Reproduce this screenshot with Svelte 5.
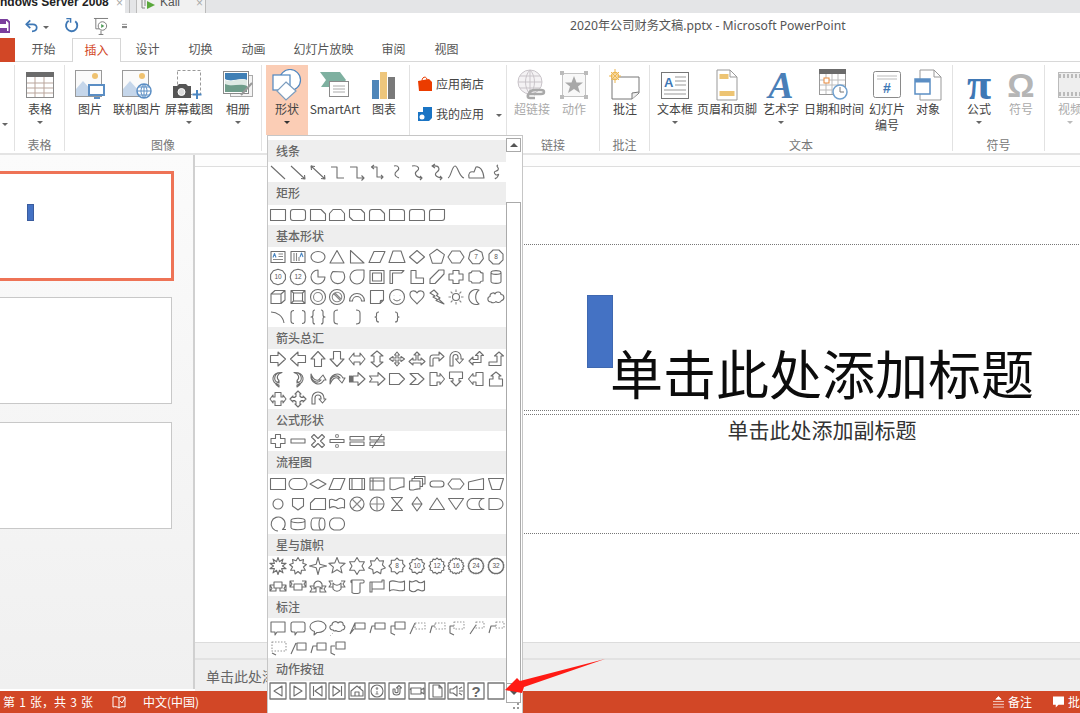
<script>
  // polygon / star outlines for the shape gallery, centred on a 20x20 cell
  function poly(n, r, ry = r, rot = -90) {
    let d = "";
    for (let i = 0; i < n; i++) {
      const a = ((rot + (i * 360) / n) * Math.PI) / 180;
      d += (i ? "L" : "M") + (10 + r * Math.cos(a)).toFixed(1) + " " + (10 + ry * Math.sin(a)).toFixed(1);
    }
    return d + "Z";
  }
  function star(n, ro, ri) {
    let d = "";
    for (let i = 0; i < n * 2; i++) {
      const r = i % 2 ? ri : ro;
      const a = ((-90 + (i * 180) / n) * Math.PI) / 180;
      d += (i ? "L" : "M") + (10 + r * Math.cos(a)).toFixed(1) + " " + (10 + r * Math.sin(a)).toFixed(1);
    }
    return d + "Z";
  }
  const circle = (r, cx = 10, cy = 10) => `M${cx - r} ${cy}a${r} ${r} 0 1 0 ${r * 2} 0a${r} ${r} 0 1 0 ${-r * 2} 0Z`;
  const box = "M2.5 4.5H17.5V15.5H2.5Z";

  const callout1 = "M7 11L3 16H3M8 5H18V11H8ZM8 5L3 16";
  const callout2 = "M8 5H18V11H8ZM8 8H5L3 15";
  const callout3 = "M8 4H18V11H8ZM8 8H4V15L8 17";

  const sections = [
    { title: "线条", shapes: [
      "M3 4L17 17",
      "M3 4L17 17M13 16.5L17 17L16.5 13",
      "M3 4L17 17M13 16.5L17 17L16.5 13M7 4.5L3 4L3.5 8",
      "M4 5H10V16H17",
      "M3 5H10V16H17M14.5 13.5L17 16L14.5 18.5",
      "M5 5H10V15H16M14 13L16 15L14 17M7 3L4.5 5L7 7",
      "M7 4C12 3 13 7 10 9S7 14 12 16",
      "M5 4C12 3 13 7 10 9S8 15 15 16M13 14L15 16L13 18",
      "M6 4C13 3 13 8 10 10S8 15 15 16M13 14L15 16L13 18M8 2L5 4L8 6",
      "M2 16C5 15 6 4 9 4S13 15 18 16",
      "M3 16C2 11 4 9 8 10L10 5C14 4 17 8 18 16Z",
      "M12 3C9 4 14 6 12 8S7 9 9 12S14 10 12 14S8 15 10 17",
    ]},
    { title: "矩形", shapes: [
      box,
      "M2.5 7Q2.5 4.5 5 4.5H15Q17.5 4.5 17.5 7V13Q17.5 15.5 15 15.5H5Q2.5 15.5 2.5 13Z",
      "M2.5 4.5H13L17.5 9V15.5H2.5Z",
      "M6 4.5H14L17.5 8.5V15.5H2.5V8.5Z",
      "M2.5 4.5H14L17.5 8V15.5H6L2.5 12Z",
      "M5 4.5H13.5L17.5 8.5V15.5H2.5V7Q2.5 4.5 5 4.5Z",
      "M2.5 4.5H15Q17.5 4.5 17.5 7V15.5H2.5Z",
      "M5 4.5H15Q17.5 4.5 17.5 7V15.5H2.5V7Q2.5 4.5 5 4.5Z",
      "M5 4.5H17.5V13Q17.5 15.5 15 15.5H2.5V7Q2.5 4.5 5 4.5Z",
    ]},
    { title: "基本形状", shapes: [
      { d: "M3 4.5H17V15.5H3Z", extra: "M10.5 7H15M10.5 9.5H15M5 12.5H15", blue: "M5 10.5L6.5 6.5L8 10.5" },
      { d: "M3 4.5H17V15.5H3Z", extra: "M6 6V14M8.5 6V14M11 10V14", blue: "M12 10L13.5 6L15 10" },
      "M3 10A7 5.5 0 1 0 17 10A7 5.5 0 1 0 3 10Z",
      "M10 3.5L17 16H3Z",
      "M3.5 3.5L17 16H3.5Z",
      "M7 4.5H18L13 15.5H2Z",
      "M6 4H14L18 15.5H2Z",
      "M10 3.5L17.5 10L10 16.5L2.5 10Z",
      poly(5, 7.8),
      "M6 4H14L18 10L14 16H6L2 10Z",
      { d: poly(7, 7.6), t: "7" },
      { d: poly(8, 7.6, 7.6, -67.5), t: "8" },
      { d: poly(10, 7.8), t: "10" },
      { d: poly(12, 7.8), t: "12" },
      "M10 3A7 7 0 1 0 17 10H10Z",
      "M6 4.5A7 7 0 1 0 16 5Z",
      "M10 3H17V10A7 7 0 1 1 10 3Z",
      "M3 3.5H17V16.5H3ZM5.5 6H14.5V14H5.5Z",
      "M3 3.5H17L14.5 6H5.5V16.5H3Z",
      "M4 3.5H9V11H16.5V16.5H4Z",
      "M3 12L12 3H17V7L8 16.5H3Z",
      "M7 3.5H13V7H17V13H13V16.5H7V13H3V7H7Z",
      "M6 4H14Q14 6 17 6V14Q14 14 14 16H6Q6 14 3 14V6Q6 6 6 4Z",
      "M5 5.5C5 3 15 3 15 5.5V14.5C15 17 5 17 5 14.5ZM5 5.5C5 8 15 8 15 5.5",
      "M3 7L7 3.5H17V13L13 16.5H3ZM3 7H13V16.5M13 7L17 3.5",
      "M3 3.5H17V16.5H3ZM5.5 6H14.5V14H5.5ZM3 3.5L5.5 6M17 3.5L14.5 6M3 16.5L5.5 14M17 16.5L14.5 14",
      { d: circle(7.5), extra: circle(4.5) },
      { d: circle(7.5), extra: circle(4.8) + "M6.5 6.5L13.5 13.5M7.5 5.5L14.5 12.5" },
      "M2.5 14A7.5 7.5 0 0 1 17.5 14H14.5A4.5 4.5 0 0 0 5.5 14Z",
      "M3.5 3.5H16.5V13L13 16.5H3.5ZM16.5 13L13.5 13.5L13 16.5",
      { d: circle(7.5), extra: "M7 8V8.2M13 8V8.2M6.5 12C8 14.5 12 14.5 13.5 12" },
      "M10 6C8 2.5 2.5 3.5 3 8C3.5 12 8 14 10 17C12 14 16.5 12 17 8C17.5 3.5 12 2.5 10 6Z",
      "M7 3L11 7L9.5 8.5L13 11L11.5 12L17 17L9 13.5L10.5 12.5L6 10L8 9L3 6Z",
      { d: circle(3.5), extra: "M10 2.5V5M10 15V17.5M2.5 10H5M15 10H17.5M4.7 4.7L6.5 6.5M13.5 13.5L15.3 15.3M15.3 4.7L13.5 6.5M6.5 13.5L4.7 15.3" },
      "M13 3A7.5 7.5 0 1 0 13 17A9 9 0 0 1 13 3Z",
      "M5 15C1 15 1 10 4 9.5C3.5 6 8 5 9 7C10 4 15 4.5 15 7.5C18.5 7.5 19 13 15.5 13.5C14.5 16 11 16 10 14.5C9 16 6 16 5 15Z",
      "M3 5C9 5 15 9 16 16",
      "M6 3.5Q3 3.5 3 6V14Q3 16.5 6 16.5M14 3.5Q17 3.5 17 6V14Q17 16.5 14 16.5",
      "M7 3Q5 3 5 5V8Q5 10 3 10Q5 10 5 12V15Q5 17 7 17M13 3Q15 3 15 5V8Q15 10 17 10Q15 10 15 12V15Q15 17 13 17",
      "M11 3Q7 3 7 6V14Q7 17 11 17",
      "M9 3Q13 3 13 6V14Q13 17 9 17",
      "M12 5Q9.5 5 9.5 7V9Q9.5 10 8 10Q9.5 10 9.5 11V13Q9.5 15 12 15",
      "M8 5Q10.5 5 10.5 7V9Q10.5 10 12 10Q10.5 10 10.5 11V13Q10.5 15 8 15",
    ]},
    { title: "箭头总汇", shapes: [
      "M2.5 6.5H10V3L17.5 10L10 17V13.5H2.5Z",
      "M17.5 6.5H10V3L2.5 10L10 17V13.5H17.5Z",
      "M6.5 17.5V10H3L10 2.5L17 10H13.5V17.5Z",
      "M6.5 2.5V10H3L10 17.5L17 10H13.5V2.5Z",
      "M2 10L7 4V7H13V4L18 10L13 16V13H7V16Z",
      "M10 2L16 7H13V13H16L10 18L4 13H7V7H4Z",
      "M10 3L12.5 6H11V9H14V7.5L17.5 10L14 12.5V11H11V14H12.5L10 17L7.5 14H9V11H6V12.5L2.5 10L6 7.5V9H9V6H7.5Z",
      "M10 3L13 6H11V11H14V9L18 12.5L14 16V14H6V16L2 12.5L6 9V11H9V6H7Z",
      "M3 17V9Q3 6 6 6H12V3L17 7.5L12 12V9H7Q6 9 6 10V17Z",
      "M4 17V8A5.5 5.5 0 0 1 15 8V10H17.5L13.5 14.5L9.5 10H12V8A2.5 2.5 0 0 0 7 8V17Z",
      "M3 12L7 8V10.5H12V6.5H9.5L13.5 2.5L17.5 6.5H15V13.5H7V16Z",
      "M3 13H11V7H8.5L13 3L17.5 7H15V16.5H3Z",
      "M14 3.5C6 3 4 12 11 14V11.5L8 15.5L11 18V16C2 14 3 3 14 3.5ZM14 3.5C9 5 8 9 11 11.5",
      "M6 3.5C14 3 16 12 9 14V11.5L12 15.5L9 18V16C18 14 17 3 6 3.5ZM6 3.5C11 5 12 9 9 11.5",
      "M3 5C3 13 10 15 13 11H10.5L15 6L18 11H16C12 18 2 15 3 5ZM3 5C5 10 8 12 10.5 11",
      "M3 15C3 7 10 5 13 9H10.5L15 14L18 9H16C12 2 2 5 3 15ZM3 15C5 10 8 8 10.5 9",
      "M6 7H11V3.5L18 10L11 16.5V13H6ZM2.5 7H3.5V13H2.5ZM4.5 7H5V13H4.5Z",
      "M2.5 7H11V3.5L18 10L11 16.5V13H2.5L5 10Z",
      "M2.5 4.5H12L17.5 10L12 15.5H2.5Z",
      "M3 4.5H11L17 10L11 15.5H3L9 10Z",
      "M3 3.5H10V7H13V4.5L17.5 10L13 15.5V13H10V16.5H3Z",
      "M3.5 3H16.5V9.5H13V12H15L10 17L5 12H7V9.5H3.5Z",
      "M17 3.5H10V7H7V4.5L2.5 10L7 15.5V13H10V16.5H17Z",
      "M3.5 17V10H7V7H5L10 3L15 7H13V10H16.5V17Z",
      "M7 3.5H13V8H15V6L18 10L15 14V12H13V16.5H7V12H5V14L2 10L5 6V8H7Z",
      "M10 2L13 5H12V7.5H13V8.5H15V7L18 10L15 13V11.5H13V12.5H12V15H13L10 18L7 15H8V12.5H7V11.5H5V13L2 10L5 7V8.5H7V7.5H8V5H7Z",
      "M4 15V9A6 6 0 0 1 16 9V10H18L14.5 14L11 10H13V9A3 3 0 0 0 7 9V15Z",
    ]},
    { title: "公式形状", shapes: [
      "M7.5 3.5H12.5V7.5H17V12.5H12.5V16.5H7.5V12.5H3V7.5H7.5Z",
      "M3 8H17V12H3Z",
      "M6 3.5L10 7.5L14 3.5L16.5 6L12.5 10L16.5 14L14 16.5L10 12.5L6 16.5L3.5 14L7.5 10L3.5 6Z",
      { d: "M3 8.5H17V11.5H3Z", extra: circle(1.5, 10, 5) + circle(1.5, 10, 15) },
      "M3 5.5H17V9H3ZM3 11H17V14.5H3Z",
      "M3 5.5H17V9H3ZM3 11H17V14.5H3ZM5 17L15 3",
    ]},
    { title: "流程图", shapes: [
      box,
      "M6 4.5H14A5 5.5 0 0 1 14 15.5H6A5 5.5 0 0 1 6 4.5Z",
      "M10 5.5L18 10L10 14.5L2 10Z",
      "M6.5 4.5H18L13.5 15.5H2Z",
      "M2.5 4.5H17.5V15.5H2.5ZM5 4.5V15.5M15 4.5V15.5",
      "M3 4H17V16H3ZM3 7H17M6 4V16",
      "M3 4H17V13C12 12 8 18 3 15Z",
      "M2.5 7H13V15C9 14 6 17.5 2.5 15.5ZM5 7V4.5H15.5V12.5H13M7.5 4.5V2.5H18V10H15.5",
      "M6 7H14A3 3 0 0 1 14 13H6A3 3 0 0 1 6 7Z",
      "M6 5H14L18 10L14 15H6L2 10Z",
      "M2.5 8L17.5 4.5V15.5H2.5Z",
      "M2.5 4.5H17.5L14 15.5H6Z",
      circle(5),
      "M4.5 4.5H15.5V12L10 16L4.5 12Z",
      "M7 4.5H17.5V15.5H2.5V9Z",
      "M2.5 6C6 3.5 8 8 10 6S14.5 3.5 17.5 6V14C14 12 12 16 10 14S6 12 2.5 14Z",
      { d: circle(7), extra: "M5 5L15 15M15 5L5 15" },
      { d: circle(7), extra: "M3 10H17M10 3V17" },
      "M4.5 3.5H15.5L4.5 16.5H15.5Z",
      "M10 3L15 10L10 17L5 10ZM5 10H15",
      "M10 4L17.5 15.5H2.5Z",
      "M10 15.5L17.5 4.5H2.5Z",
      "M6 4.5H18A5 5.5 0 0 0 18 15.5H6A5 5.5 0 0 1 6 4.5Z",
      "M3 4.5H11A6 5.5 0 0 1 11 15.5H3Z",
      "M10 17A7 7 0 1 1 14.5 15.5H18",
      "M3 6.5C3 3.5 17 3.5 17 6.5V13.5C17 16.5 3 16.5 3 13.5ZM3 6.5C3 9.5 17 9.5 17 6.5",
      "M6 4H14C18 4 18 16 14 16H6C2 16 2 4 6 4ZM14 4C10 4 10 16 14 16",
      "M7 4H13C19 6 19 14 13 16H7C1 14 1 6 7 4Z",
    ]},
    { title: "星与旗帜", shapes: [
      star(10, 8.5, 4.5),
      star(9, 8.5, 5.5),
      star(4, 8.5, 2.5),
      star(5, 8.5, 3.8),
      star(6, 8.5, 5),
      star(7, 8.5, 5.5),
      { d: star(8, 8, 6.2), t: "8" },
      { d: star(10, 8, 6.4), t: "10" },
      { d: star(12, 8, 6.6), t: "12" },
      { d: star(16, 8, 6.8), t: "16" },
      { d: star(24, 8, 7), t: "24" },
      { d: star(32, 8, 7.2), t: "32" },
      "M6 6H14V12H6ZM6 9H2V15H8V12M14 9H18V15H12V12M2 15L4 12.5L2 9M18 15L16 12.5L18 9",
      "M6 8H14V14H6ZM6 5H2V11H6M14 5H18V11H14M2 5L4 8L2 11M18 5L16 8L18 11",
      "M6 8C8 4 12 4 14 8V13C12 10 8 10 6 13ZM6 10H2L4 13L2 16H8V12M14 10H18L16 13L18 16H12V12",
      "M6 7C8 10 12 10 14 7V13C12 16 8 16 6 13ZM6 5H2L4 8L2 11H6M14 5H18L16 8L18 11H14",
      "M5 4H16C17.5 4 17.5 7 16 7H13V16C13 18 5 18 5 16ZM5 4C3.5 4 3.5 7 5 7V17",
      "M3 6H15V4H17V13H5V16H3ZM5 6V13",
      "M2.5 6C7 2 12 9 17.5 5V14C12 17 7 11 2.5 15Z",
      "M2.5 5C6 8 8 3 10 5S14 8 17.5 5V14C14 17 12 12 10 14S6 17 2.5 14Z",
    ]},
    { title: "标注", shapes: [
      "M3 4H17V14H9L7 17L7 14H3Z",
      "M5 4H15Q17 4 17 6V12Q17 14 15 14H9L7 17V14H5Q3 14 3 12V6Q3 4 5 4Z",
      "M10 3C15 3 18 6 18 9S14 15 9 14.5L6 17L6.5 13.5C3.5 12.5 2 11 2 8.5C2 5.5 6 3 10 3Z",
      { d: "M6 12C2 12 2 7 5 7C5 3 10 3 11 5C13 3 17 4 16 7C19 8 18 12 15 12C14 14 10 14 9 12.5C8 13.5 7 13 6 12Z", extra: "M5 15.5H5.5M3 17.5H3.5" },
      callout1, callout2, callout3,
      { d: "M8 5L3 16", dash: "M8 5H18V11H8Z" },
      { d: "M8 8H5L3 15", dash: "M8 5H18V11H8Z" },
      { d: "M8 8H4V15L8 17", dash: "M8 4H18V11H8Z" },
      { d: "M4 16L10 7", dash: "M10 4H18V10H10Z" },
      { d: "M10 8H5L3 15", dash: "M10 4H18V10H10Z" },
      { d: "M8 17L4 15", dash: "M4 4H18V13H4Z" },
      "M3 16L8 5M9 5V12M9 5H18V12H9Z",
      "M3 15L5 8H9M9 5V12M9 5H18V12H9Z",
      "M8 8H4V15L8 17M9 4V11M9 4H18V11H9Z",
    ]},
    { title: "动作按钮", btn: true, shapes: [
      "M14 5V15L6 10Z",
      "M6 5V15L14 10Z",
      "M14 5V15L7 10ZM5.5 5V15",
      "M6 5V15L13 10ZM14.5 5V15",
      "M4 10L10 5L16 10V15H4ZM8 15V11H12V15M13 5V7",
      { d: circle(6), extra: circle(0.8, 10, 7.5) + "M8.5 13H11.5M10 10V13" },
      "M6 8V11C6 15 13 15 13 11V7H14.5L12 4.5L9.5 7H11V11C11 12 8 12 8 11V8Z",
      "M4 7H14V13H4ZM14 9L17 7V13L14 11M4 7L3 9",
      "M6 4H12L15 7V16H6ZM12 4V7H15",
      "M4 8H7L11 5V15L7 12H4ZM13 8L16 6M13 10H17M13 12L16 14",
      { d: "", help: true },
      "",
    ]},
  ];
</script>

<div class="app">
  <div class="winbar">
    <div class="wintab">
      <span class="wintab-text">ndows Server 2008</span>
      <span class="x">×</span>
    </div>
    <div class="split"></div>
    <div class="wintab kali">
      <svg width="18" height="13" viewBox="0 0 18 13">
        <path d="M1 0V8H4M4 0V6" fill="none" stroke="#888" />
        <path d="M6 1V9L14 5Z" fill="#5aa83c" />
      </svg>
      <span class="kali-text">Kali</span>
      <span class="x">×</span>
    </div>
  </div>

  <div class="titlebar">
    <div class="qat">
      <svg class="q-save" width="10" height="14" viewBox="0 0 10 14">
        <path d="M-3 1H7L9.5 3.5V13H-3Z" fill="none" stroke="#7a3f9d" stroke-width="2" />
        <path d="M0 1.5H6V5H0ZM0 9H7V13H0Z" fill="#7a3f9d" />
      </svg>
      <svg class="q-undo" width="14" height="14" viewBox="0 0 16 14">
        <path d="M2 5H9C15 5 15 13 8 13" fill="none" stroke="#3f78b5" stroke-width="2" />
        <path d="M6 0.5L1.5 5L6 9.5" fill="none" stroke="#3f78b5" stroke-width="2" />
      </svg>
      <span class="caret q-caret"></span>
      <svg class="q-redo" width="15" height="15" viewBox="0 0 16 16">
        <path d="M5 3A6 6 0 1 0 12 3.500" fill="none" stroke="#3f78b5" stroke-width="2" />
        <path d="M2.500 0.500H7V5" fill="none" stroke="#3f78b5" stroke-width="1.600" />
      </svg>
      <svg class="q-show" width="16" height="20" viewBox="0 0 17 20">
        <path d="M1 2H16M3 2V13H8M6 19H11M8.500 15V19" fill="none" stroke="#777" />
        <circle cx="10" cy="10" r="4.500" fill="#fff" stroke="#777" />
        <path d="M8.700 7.800V12.200L12 10Z" fill="#4e9a57" />
      </svg>
      <span class="q-more"></span>
    </div>
    <div class="doc-title">2020年公司财务文稿.pptx - Microsoft PowerPoint</div>
  </div>

  <div class="tabs">
    <div class="file"></div>
    <div class="tab t-home">开始</div>
    <div class="tab active">插入</div>
    <div class="tab t-wide">设计</div>
    <div class="tab t-wide">切换</div>
    <div class="tab t-wide">动画</div>
    <div class="tab t-show">幻灯片放映</div>
    <div class="tab t-wide">审阅</div>
    <div class="tab t-wide">视图</div>
  </div>

  <div class="ribbon">
    <div class="group g15">
      <div class="items"><span class="caret stub"></span></div>
    </div>

    <div class="group g50">
      <div class="items">
        <div class="btn w50">
          <div class="ico">
            <svg width="28" height="26" viewBox="0 0 28 26">
              <rect x="0.500" y="0.500" width="27" height="25" fill="#fff" stroke="#8b8b8b" />
              <rect x="0" y="0" width="28" height="5" fill="#6b6b6b" />
              <path d="M1 11H27M1 16H27M1 21H27M9 5V25M18 5V25" stroke="#b9a59b" />
            </svg>
          </div>
          <span class="lbl">表格</span><span class="caret"></span>
        </div>
      </div>
      <div class="glabel">表格</div>
    </div>

    <div class="group g197">
      <div class="items pad3">
        <div class="btn w44">
          <div class="ico">
            <svg width="32" height="32" viewBox="0 0 32 32">
              <rect x="1.500" y="1.500" width="26" height="26" fill="#fafafa" stroke="#999" />
              <path d="M2 27V20L9 12L18 22V27Z" fill="#c5d6ea" />
              <circle cx="21" cy="7" r="3" fill="#efc270" />
              <rect x="15" y="16" width="15" height="10" fill="#fff" stroke="#5b8ec4" stroke-width="2" />
              <path d="M20 29H26" stroke="#5b8ec4" stroke-width="2" />
            </svg>
          </div>
          <span class="lbl">图片</span>
        </div>
        <div class="btn w50">
          <div class="ico">
            <svg width="32" height="32" viewBox="0 0 32 32">
              <rect x="1.500" y="1.500" width="26" height="26" fill="#fafafa" stroke="#999" />
              <path d="M2 27V20L9 12L18 22V27Z" fill="#c5d6ea" />
              <circle cx="21" cy="7" r="3" fill="#efc270" />
              <circle cx="23" cy="22" r="7" fill="#fff" stroke="#5b8ec4" stroke-width="1.500" />
              <path d="M16 22H30M23 15V29M18 18H28M18 26H28M23 15C19 19 19 25 23 29M23 15C27 19 27 25 23 29" fill="none" stroke="#5b8ec4" />
            </svg>
          </div>
          <span class="lbl">联机图片</span>
        </div>
        <div class="btn w54">
          <div class="ico">
            <svg width="34" height="32" viewBox="0 0 34 32">
              <rect x="5.500" y="1.500" width="23" height="24" fill="none" stroke="#999" stroke-dasharray="3 2" />
              <path d="M1 17H5L7 15H14L16 17H19V29H1Z" fill="#555" />
              <circle cx="9.500" cy="23" r="3.500" fill="#ddd" stroke="#fff" />
              <path d="M25 21V30M20.500 25.500H29.500" stroke="#4a86c2" stroke-width="2" />
            </svg>
          </div>
          <span class="lbl">屏幕截图</span><span class="caret"></span>
        </div>
        <div class="btn w44">
          <div class="ico">
            <svg width="32" height="30" viewBox="0 0 32 30">
              <rect x="8.500" y="5.500" width="22" height="21" fill="#f4f4f4" stroke="#aaa" />
              <rect x="1.500" y="1.500" width="25" height="22" fill="#fff" stroke="#8a8a8a" />
              <path d="M3 3H25V10C18 7 10 13 3 9Z" fill="#3f7fb5" />
              <path d="M3 10C10 13 18 7 25 10V16C18 13 10 17 3 14Z" fill="#dfe9e4" />
              <path d="M3 14C10 17 18 13 25 16V22H3Z" fill="#6f9c8a" />
              <path d="M19 25L30 13" stroke="#999" stroke-width="2" />
            </svg>
          </div>
          <span class="lbl">相册</span><span class="caret"></span>
        </div>
      </div>
      <div class="glabel">图像</div>
    </div>

    <div class="group g148">
      <div class="items pad4">
        <div class="btn w42 hot">
          <div class="ico">
            <svg width="32" height="32" viewBox="0 0 32 32">
              <circle cx="19" cy="11" r="10.500" fill="#fff" stroke="#4f87c0" stroke-width="1.200" />
              <rect x="2" y="6" width="17" height="15" fill="#fff" stroke="#4f87c0" stroke-width="1.200" />
              <path d="M15 13L25 22L15 31L6 22Z" fill="#fff" stroke="#7b9cbe" stroke-width="1.200" />
            </svg>
          </div>
          <span class="lbl">形状</span><span class="caret dark"></span>
        </div>
        <div class="btn w54">
          <div class="ico">
            <svg width="32" height="30" viewBox="0 0 32 30">
              <path d="M1 2H21L27 10L21 17H2L7 10Z" fill="#7eb0a0" />
              <rect x="10.500" y="11.500" width="19" height="15" fill="#fff" stroke="#8a8a8a" />
              <path d="M14 16H26M14 19H26M14 22H26" stroke="#aaa" />
            </svg>
          </div>
          <span class="lbl">SmartArt</span>
        </div>
        <div class="btn w44">
          <div class="ico">
            <svg width="24" height="28" viewBox="0 0 24 28">
              <rect x="0" y="9" width="7" height="19" fill="#4f86b9" />
              <rect x="8" y="1" width="7" height="27" fill="#eec67c" />
              <rect x="16" y="6" width="7" height="22" fill="#797979" />
            </svg>
          </div>
          <span class="lbl">图表</span>
        </div>
      </div>
      <div class="glabel"></div>
    </div>

    <div class="group g97">
      <div class="items apps">
        <div class="app-row">
          <svg width="14" height="16" viewBox="0 0 14 16">
            <path d="M0 5L11 3L14 6V15H1Z" fill="#eb3c00" />
            <path d="M4 5C4 0 9 0 9 4" fill="none" stroke="#eb3c00" />
          </svg>
          <span>应用商店</span>
        </div>
        <div class="app-row">
          <svg width="14" height="15" viewBox="0 0 14 15">
            <path d="M5 0H14V11L11 14H0V5H5Z" fill="#1a74c4" />
            <circle cx="4" cy="10" r="2.500" fill="#fff" />
          </svg>
          <span>我的应用</span>
          <span class="caret app-caret"></span>
        </div>
      </div>
      <div class="glabel"></div>
    </div>

    <div class="group g93">
      <div class="items">
        <div class="btn w50 off">
          <div class="ico">
            <svg width="30" height="32" viewBox="0 0 30 32">
              <circle cx="13" cy="13" r="12" fill="#f4f2f4" stroke="#c9c4c9" />
              <path d="M1 13H25M13 1V25M3 7H23M3 19H23M13 1C7 7 7 19 13 25M13 1C19 7 19 19 13 25" fill="none" stroke="#c9c4c9" />
              <path d="M12 25C12 21 18 21 19 21H24M18 29H13C10 29 10 25 13 25H18" fill="none" stroke="#a9a9a9" stroke-width="2.500" />
              <path d="M17 25H24C28 25 28 21 24 21" fill="none" stroke="#a9a9a9" stroke-width="2.500" />
            </svg>
          </div>
          <span class="lbl">超链接</span>
        </div>
        <div class="btn w34 off">
          <div class="ico">
            <svg width="28" height="28" viewBox="0 0 28 28">
              <rect x="2.500" y="2.500" width="23" height="23" fill="#f8f8f8" stroke="#c4c4c4" />
              <path d="M0 0h4v4h-4zM24 0h4v4h-4zM0 24h4v4h-4zM24 24h4v4h-4z" fill="#bbb" />
              <path d="M14 5L16.500 11.500H23L18 15.500L20 22L14 18L8 22L10 15.500L5 11.500H11.500Z" fill="#a8a8a8" />
            </svg>
          </div>
          <span class="lbl">动作</span>
        </div>
      </div>
      <div class="glabel">链接</div>
    </div>

    <div class="group g50">
      <div class="items">
        <div class="btn w50">
          <div class="ico">
            <svg width="32" height="32" viewBox="0 0 32 32">
              <path d="M3 8H30V24L23 30H3Z" fill="#fff" stroke="#777" />
              <path d="M30 23L23 24L23 30" fill="#eee" stroke="#777" />
              <circle cx="6" cy="7" r="3.500" fill="#fff" stroke="#edb752" stroke-width="1.500" />
              <path d="M6 0V14M0 7H12M2 3L10 11M10 3L2 11" stroke="#edb752" />
            </svg>
          </div>
          <span class="lbl">批注</span>
        </div>
      </div>
      <div class="glabel">批注</div>
    </div>

    <div class="group g303">
      <div class="items">
        <div class="btn w50">
          <div class="ico">
            <svg width="30" height="28" viewBox="0 0 30 28">
              <rect x="1.500" y="1.500" width="27" height="26" fill="#fff" stroke="#777" />
              <text x="4" y="16" class="svg-a">A</text>
              <path d="M15 6H26M15 10H26M15 14H26M4 19H26M4 23H26" stroke="#999" />
            </svg>
          </div>
          <span class="lbl">文本框</span><span class="caret"></span>
        </div>
        <div class="btn w54">
          <div class="ico">
            <svg width="22" height="32" viewBox="0 0 22 32">
              <path d="M1 1H14L21 8V31H1ZM14 1V8H21" fill="#fff" stroke="#999" />
              <rect x="3.500" y="5" width="9" height="5" fill="#edc473" />
              <rect x="3.500" y="22" width="15" height="5" fill="#edc473" />
            </svg>
          </div>
          <span class="lbl">页眉和页脚</span>
        </div>
        <div class="btn w54">
          <div class="ico"><span class="wordart">A</span></div>
          <span class="lbl">艺术字</span><span class="caret"></span>
        </div>
        <div class="btn w52">
          <div class="ico">
            <svg width="30" height="32" viewBox="0 0 30 32">
              <rect x="0.500" y="0.500" width="26" height="25" fill="#fff" stroke="#999" />
              <rect width="27" height="5" fill="#6b6b6b" />
              <path d="M1 11H26M1 16H26M1 21H26M7 5V25M13 5V25M19 5V25" stroke="#bbb" />
              <rect x="5" y="9" width="5" height="5" fill="#fff" stroke="#e88a3c" />
              <circle cx="21" cy="23" r="7" fill="#fff" stroke="#6fa0cf" stroke-width="1.500" />
              <path d="M21 18V23H25" fill="none" stroke="#777" />
            </svg>
          </div>
          <span class="lbl">日期和时间</span>
        </div>
        <div class="btn w54">
          <div class="ico">
            <svg width="28" height="28" viewBox="0 0 28 28">
              <rect x="0.500" y="0.500" width="27" height="26" rx="2" fill="#fff" stroke="#8a8a8a" />
              <path d="M4 5H24M4 8H24" stroke="#bbb" />
              <text x="14" y="22" class="svg-hash">#</text>
            </svg>
          </div>
          <span class="lbl">幻灯片</span><span class="lbl">编号</span>
        </div>
        <div class="btn w28">
          <div class="ico">
            <svg width="28" height="32" viewBox="0 0 28 32">
              <path d="M6 1H20L27 8V31H6ZM20 1V8H27" fill="#fff" stroke="#999" />
              <rect x="1" y="10" width="15" height="15" fill="#fff" stroke="#5b8ec4" stroke-width="1.500" />
              <rect x="1" y="10" width="15" height="3.500" fill="#5b8ec4" />
            </svg>
          </div>
          <span class="lbl">对象</span>
        </div>
      </div>
      <div class="glabel">文本</div>
    </div>

    <div class="group g92">
      <div class="items">
        <div class="btn w52">
          <div class="ico"><span class="pi">π</span></div>
          <span class="lbl">公式</span><span class="caret"></span>
        </div>
        <div class="btn w32 off">
          <div class="ico"><span class="omega">Ω</span></div>
          <span class="lbl">符号</span>
        </div>
      </div>
      <div class="glabel">符号</div>
    </div>

    <div class="group last">
      <div class="items">
        <div class="btn w50 off">
          <div class="ico">
            <svg width="24" height="28" viewBox="0 0 24 28">
              <rect x="0.500" y="1.500" width="30" height="25" fill="#eee" stroke="#bbb" />
              <path d="M1 5H30M1 23H30" stroke="#bbb" stroke-width="4" stroke-dasharray="2 2" />
            </svg>
          </div>
          <span class="lbl">视频</span><span class="caret"></span>
        </div>
      </div>
    </div>
  </div>

  <div class="main">
    <div class="thumbs">
      <div class="thumb current"><span class="mini"></span></div>
      <div class="thumb"></div>
      <div class="thumb"></div>
    </div>
    <div class="stage">
      <div class="stage-top"></div>
      <div class="canvas">
        <div class="slide">
          <span class="blue-box"></span>
          <div class="title-box">单击此处添加标题</div>
          <div class="sub-box">单击此处添加副标题</div>
        </div>
      </div>
      <div class="hscroll"></div>
      <div class="notes">单击此处添加备注</div>
    </div>
  </div>

  <div class="status">
    <span class="s-page">第 1 张，共 3 张</span>
    <svg class="s-book" width="14" height="15" viewBox="0 0 14 15">
      <path d="M7 3C5 1.500 3 1.500 1 2V12C3 11.500 5 11.500 7 13C9 11.500 11 11.500 13 12V2C11 1.500 9 1.500 7 3ZM7 3V13" fill="none" stroke="#fff" />
      <path d="M8 6L10 8L13 3" fill="none" stroke="#fff" />
    </svg>
    <span class="s-lang">中文(中国)</span>
    <span class="s-right">
      <svg width="12" height="13" viewBox="0 0 12 13">
        <path d="M3 3L6 0L9 3ZM0 5.500H12M0 8.500H12M0 11.500H12" fill="#fff" stroke="#fff" stroke-width="0.800" />
      </svg>
      <span class="s-notes">备注</span>
      <svg width="12" height="13" viewBox="0 0 12 13">
        <path d="M0 0H12V9H6L3 12V9H0Z" fill="#fff" />
      </svg>
      <span>批注</span>
    </span>
  </div>

  <div class="menu">
    <div class="menu-body">
      <div class="list">
        {#each sections as sec}
          <div class="sec-title">{sec.title}</div>
          <div class="grid">
            {#each sec.shapes as s}
              {@const shape = typeof s === "string" ? { d: s } : s}
              <svg class:action={sec.btn} width="20" height="20" viewBox="0 0 20 20">
                {#if sec.btn}
                  <rect x="2" y="2" width="16" height="16" class="btn-frame" />
                {/if}
                {#if shape.help}
                  <text x="10" y="15.500" class="help">?</text>
                {/if}
                {#if shape.d}<path d={shape.d} />{/if}
                {#if shape.extra}<path d={shape.extra} class="thin" />{/if}
                {#if shape.blue}<path d={shape.blue} class="blue" />{/if}
                {#if shape.dash}<path d={shape.dash} class="dash" />{/if}
                {#if shape.t}<text x="10" y="12.300" class="num">{shape.t}</text>{/if}
              </svg>
            {/each}
          </div>
        {/each}
      </div>
      <div class="scroller">
        <div class="sb-up"><span></span></div>
        <div class="sb-track"></div>
        <div class="sb-thumb"></div>
        <div class="sb-down"><span></span></div>
      </div>
    </div>
    <div class="grip">
      <svg width="10" height="9" viewBox="0 0 10 9">
        <path d="M6 0h2v2h-2zM2 4h2v2h-2zM6 4h2v2h-2z" fill="#999" />
      </svg>
    </div>
  </div>

  <svg class="arrow" width="110" height="42" viewBox="500 655 110 42">
    <path d="M505 690L517 678L520 681L605 659L524 687L522 693Z" fill="#ff1a14" />
  </svg>
</div>

<style>
  :global(body) {
    margin: 0;
    background: #fff;
  }

  .app {
    position: relative;
    width: 1080px;
    height: 713px;
    overflow: hidden;
    display: flex;
    flex-direction: column;
    background: #fff;
    color: #444;
    font: 12px/16px "Noto Sans CJK SC", "Noto Sans", sans-serif;
  }

  /* vm tabs on top */
  .winbar {
    flex: none;
    height: 13px;
    display: flex;
    background: #e4e5e7;
    overflow: hidden;
  }
  .wintab {
    width: 125px;
    display: flex;
    background: #fff;
    position: relative;
  }
  .wintab-text {
    margin-top: -7px;
    font: 600 12px/18px "Liberation Sans", sans-serif;
    color: #222;
    white-space: nowrap;
  }
  .x {
    position: absolute;
    right: 2px;
    top: -4px;
    color: #aaa;
    font: 12px/14px "Liberation Sans", sans-serif;
  }
  .split {
    width: 12px;
    box-sizing: border-box;
    border-right: 1px solid #bbb;
    background: linear-gradient(90deg, #e4e5e7 4px, #bbb 4px, #bbb 5px, #e4e5e7 5px);
  }
  .kali {
    width: 69px;
    background: #f1f1f1;
    border-right: 1px solid #bbb;
    box-sizing: border-box;
    padding-left: 4px;
  }
  .kali-text {
    margin-left: 1px;
    margin-top: -7px;
    font: 12px/18px "Liberation Sans", sans-serif;
    color: #555;
  }

  .titlebar {
    flex: none;
    height: 25px;
    position: relative;
    display: flex;
    align-items: center;
  }
  .qat {
    display: flex;
    align-items: center;
    height: 25px;
  }
  .q-undo {
    margin-left: 15px;
  }
  .q-caret {
    margin: 0 0 0 4px;
  }
  .q-redo {
    margin-left: 15px;
  }
  .q-show {
    margin-left: 14px;
  }
  .q-more {
    width: 5px;
    height: 2px;
    margin-left: 13px;
    border-top: 1px solid #666;
    border-bottom: 3px solid #888;
    box-sizing: content-box;
    transform: scaleY(0.7);
  }
  .doc-title {
    position: absolute;
    left: 570px;
    top: 4px;
    font: 12.200px/17px "Noto Sans", "Noto Sans CJK SC", sans-serif;
    color: #555;
    white-space: nowrap;
  }

  .tabs {
    flex: none;
    height: 24px;
    box-sizing: border-box;
    display: flex;
    align-items: stretch;
    border-bottom: 1px solid #d8d8d8;
    font-size: 12px;
    color: #555;
  }
  .file {
    width: 15px;
    background: #d24726;
    margin-bottom: -1px;
  }
  .tab {
    display: flex;
    align-items: center;
    justify-content: center;
    width: 53px;
    line-height: 22px;
    padding-bottom: 2px;
    box-sizing: border-box;
  }
  .t-home {
    width: 57px;
  }
  .t-wide {
    width: 53px;
  }
  .t-show {
    width: 87px;
  }
  .active {
    width: 49px;
    margin-bottom: -1px;
    background: #fff;
    border: 1px solid #d6d6d6;
    border-bottom: none;
    color: #d24726;
  }

  /* ribbon */
  .ribbon {
    flex: none;
    height: 93px;
    box-sizing: border-box;
    padding-top: 3px;
    display: flex;
    border-bottom: 2px solid #e4e4e4;
  }
  .group {
    flex: none;
    box-sizing: border-box;
    border-right: 1px solid #e2e2e2;
    height: 86px;
    display: flex;
    flex-direction: column;
  }
  .g15 { width: 15px; }
  .g50 { width: 50px; }
  .g197 { width: 197px; }
  .g148 { width: 148px; }
  .g97 { width: 97px; }
  .g93 { width: 93px; }
  .g303 { width: 303px; }
  .g92 { width: 92px; }
  .last { width: 60px; border-right: none; }
  .items {
    display: flex;
    height: 70px;
    flex: none;
  }
  .pad3 { padding-left: 3px; }
  .pad4 { padding-left: 4px; }
  .glabel {
    margin-top: 2px;
    text-align: center;
    color: #777;
    line-height: 16px;
  }
  .btn {
    flex: none;
    display: flex;
    flex-direction: column;
    align-items: center;
    color: #444;
  }
  .w28 { width: 28px; }
  .w32 { width: 32px; }
  .w34 { width: 34px; }
  .w42 { width: 42px; }
  .w44 { width: 44px; }
  .w50 { width: 50px; }
  .w52 { width: 52px; }
  .w54 { width: 54px; }
  .hot {
    background: #fbcdb5;
  }
  .off {
    color: #aaa;
  }
  .ico {
    height: 32px;
    margin-top: 4px;
    display: flex;
    align-items: center;
    justify-content: center;
  }
  .lbl {
    white-space: nowrap;
    line-height: 16px;
  }
  .caret {
    display: block;
    width: 0;
    height: 0;
    margin-top: 4px;
    border-left: 3px solid transparent;
    border-right: 3px solid transparent;
    border-top: 3px solid #666;
  }
  .caret.dark {
    border-top-color: #333;
  }
  .off .caret {
    border-top-color: #bbb;
  }
  .stub {
    margin: 58px 0 0 2px;
  }
  .wordart {
    font: italic bold 38px/32px "Liberation Serif", serif;
    color: #4a7fb8;
  }
  .pi {
    font: bold 44px/32px "Liberation Serif", serif;
    color: #3f78b5;
  }
  .omega {
    font: bold 34px/32px "Liberation Sans", sans-serif;
    color: #b5b5b5;
  }
  .svg-a {
    font: bold 13px "Liberation Sans", sans-serif;
    fill: #3f78b5;
  }
  .svg-hash {
    font: bold 14px "Liberation Sans", sans-serif;
    fill: #3f78b5;
    text-anchor: middle;
  }
  .apps {
    flex-direction: column;
    padding: 11px 0 0 8px;
    gap: 14px;
    box-sizing: border-box;
  }
  .app-row {
    display: flex;
    align-items: center;
    gap: 4px;
    height: 16px;
  }
  .app-row span {
    white-space: nowrap;
  }
  .app-caret {
    margin: 2px 0 0 8px;
  }

  /* work area */
  .main {
    flex: 1;
    min-height: 0;
    display: flex;
  }
  .thumbs {
    flex: none;
    width: 195px;
    margin-bottom: 2px;
    box-sizing: border-box;
    border-right: 2px solid #d0d0d0;
    padding-top: 16px;
    background: linear-gradient(#fbfbfb, #f0f0f0);
    display: flex;
    flex-direction: column;
    overflow: hidden;
  }
  .thumb {
    flex: none;
    width: 172px;
    height: 107px;
    margin: 0 0 18px 0;
    box-sizing: border-box;
    border: 1px solid #c8c8c8;
    border-left: none;
    background: #fff;
  }
  .thumb.current {
    width: 174px;
    height: 110px;
    margin-bottom: 16px;
    border: 3px solid #ee7356;
    border-left: none;
    padding: 30px 0 0 27px;
  }
  .mini {
    display: block;
    width: 7px;
    height: 17px;
    background: #4472c4;
    box-sizing: border-box;
    border: 1px solid #3a5c9e;
  }
  .stage {
    flex: 1;
    min-width: 0;
    display: flex;
    flex-direction: column;
  }
  .stage-top {
    flex: none;
    height: 11px;
    background: #fdfdfd;
    border-bottom: 1px solid #dedede;
  }
  .canvas {
    flex: none;
    height: 475px;
    background: #fff;
    overflow: hidden;
  }
  .slide {
    position: relative;
    margin-left: 72px;
    width: 1110px;
    padding-top: 77px;
    box-sizing: border-box;
  }
  .blue-box {
    position: absolute;
    left: 320px;
    top: 128px;
    width: 26px;
    height: 73px;
    background: #4472c4;
    box-sizing: border-box;
    border: 1px solid #3f68b0;
  }
  .title-box {
    height: 167px;
    box-sizing: border-box;
    border-top: 1px dotted #777;
    border-bottom: 1px dotted #777;
    display: flex;
    justify-content: center;
    align-items: flex-end;
    font: 53px/62px "Noto Sans CJK SC", sans-serif;
    color: #0c0c0c;
    padding-bottom: 7px;
  }
  .sub-box {
    margin-top: 3px;
    height: 120px;
    box-sizing: border-box;
    border-top: 1px dotted #777;
    border-bottom: 1px dotted #777;
    text-align: center;
    font: 21px/28px "Noto Sans CJK SC", sans-serif;
    color: #333;
  }
  .hscroll {
    flex: none;
    height: 15px;
    background: #f0f0f0;
    border-top: 1px solid #dcdcdc;
    border-bottom: 2px solid #e2e2e2;
  }
  .notes {
    flex: 1;
    background: #efefef;
    padding: 6px 0 0 11px;
    font-size: 14px;
    line-height: 20px;
    color: #666;
  }

  .status {
    flex: none;
    height: 22px;
    background: #d24726;
    color: #fff;
    display: flex;
    align-items: center;
    padding-left: 3px;
    white-space: nowrap;
    overflow: hidden;
  }
  .s-page {
    width: 109px;
    word-spacing: 1.500px;
  }
  .s-book {
    flex: none;
  }
  .s-lang {
    margin-left: 17px;
  }
  .s-right {
    margin-left: auto;
    margin-right: -12px;
    width: 99px;
    flex: none;
    display: flex;
    align-items: center;
    gap: 4px;
  }
  .s-notes {
    margin-right: 17px;
  }

  /* shapes dropdown */
  .menu {
    position: absolute;
    left: 267px;
    top: 135px;
    width: 256px;
    height: 578px;
    box-sizing: border-box;
    background: #fff;
    border: 1px solid #c6c6c6;
    border-bottom: none;
    display: flex;
    flex-direction: column;
  }
  .menu-body {
    flex: 1;
    min-height: 0;
    display: flex;
  }
  .list {
    width: 238px;
    flex: none;
    padding-top: 4px;
  }
  .sec-title {
    height: 22.300px;
    box-sizing: border-box;
    padding-left: 8px;
    background: #eee;
    color: #666;
    font-weight: 500;
    font-size: 12px;
    line-height: 21px;
  }
  .grid {
    display: grid;
    grid-template-columns: repeat(12, 19.830px);
    grid-auto-rows: 20px;
  }
  .grid svg {
    fill: none;
    stroke: #6e6e6e;
    stroke-width: 1.100;
    stroke-linejoin: round;
  }
  .grid .thin {
    stroke: #888;
  }
  .grid .blue {
    stroke: #4a86c2;
  }
  .grid .dash {
    stroke: #999;
    stroke-dasharray: 1.500 1.500;
  }
  .grid .num {
    font: 6.500px "Liberation Sans", sans-serif;
    text-anchor: middle;
    fill: #555;
    stroke: none;
  }
  .grid .help {
    font: bold 15px "Liberation Sans", sans-serif;
    text-anchor: middle;
    fill: #666;
    stroke: none;
  }
  .grid .btn-frame {
    stroke: #777;
    stroke-width: 1.300;
    fill: #fff;
  }
  .scroller {
    flex: 1;
    display: flex;
    flex-direction: column;
    padding: 2px 1px 0 0;
    min-width: 0;
  }
  .sb-up,
  .sb-down {
    flex: none;
    height: 14px;
    box-sizing: border-box;
    border: 1px solid #aaa;
    display: flex;
    align-items: center;
    justify-content: center;
  }
  .sb-down {
    height: 19px;
    border: none;
    border-left: 1px solid #aaa;
    border-right: 1px solid #aaa;
    border-bottom: 1px solid #aaa;
  }
  .sb-up span,
  .sb-down span {
    width: 0;
    height: 0;
    border-left: 4px solid transparent;
    border-right: 4px solid transparent;
  }
  .sb-up span {
    border-bottom: 4px solid #555;
  }
  .sb-down span {
    border-top: 4px solid #555;
  }
  .sb-track {
    flex: none;
    height: 50px;
  }
  .sb-thumb {
    flex: 1;
    box-sizing: border-box;
    border: 1px solid #aaa;
    background: #fff;
  }
  .grip {
    flex: none;
    height: 10px;
    display: flex;
    justify-content: flex-end;
    padding-right: 1px;
  }
  .arrow {
    position: absolute;
    left: 500px;
    top: 655px;
  }
</style>
